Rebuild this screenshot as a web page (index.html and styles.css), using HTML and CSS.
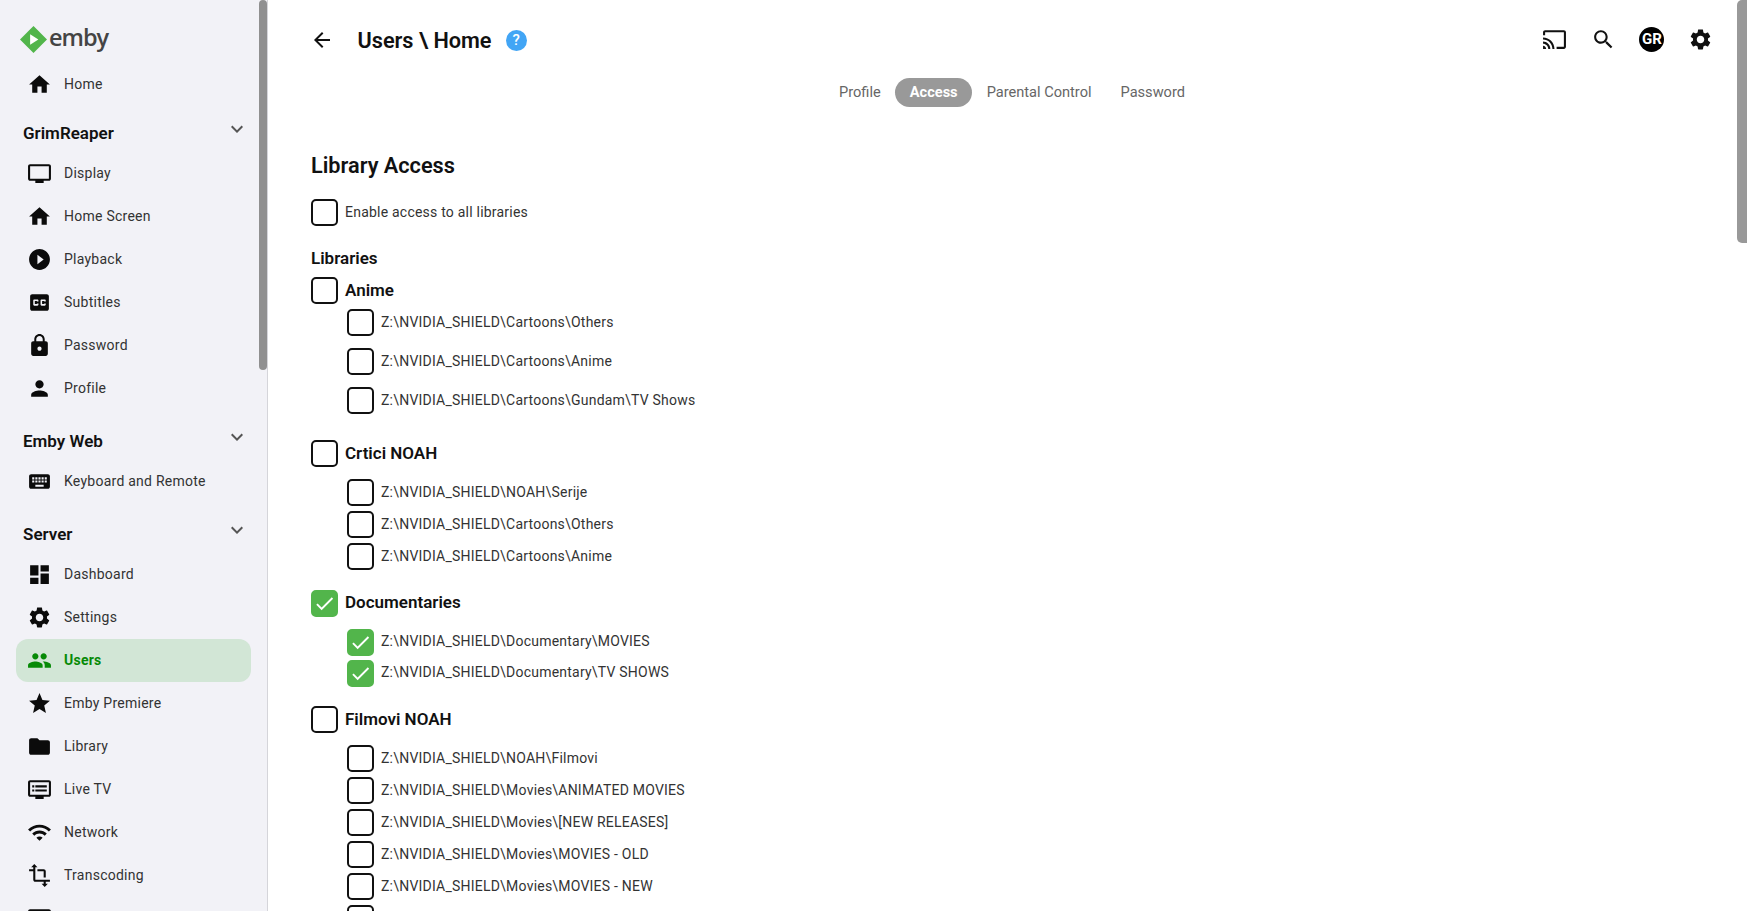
FILE: index.html
```html
<!DOCTYPE html>
<html lang="en">
<head>
  <meta charset="UTF-8">
  <title>Users - Emby</title>
  <link rel="stylesheet" href="styles.css">
</head>
<body>

  <!-- Icon set -->
  <svg class="icon-defs" xmlns="http://www.w3.org/2000/svg">
    <symbol id="i-home" viewBox="0 0 24 24"><path d="M10 20v-6h4v6h5v-8h3L12 3 2 12h3v8z"/></symbol>
    <symbol id="i-tv" viewBox="0 0 24 24"><path d="M21 3H3c-1.1 0-2 .9-2 2v12c0 1.1.9 2 2 2h5v2h8v-2h5c1.1 0 1.99-.9 1.99-2L23 5c0-1.1-.9-2-2-2zm0 14H3V5h18v12z"/></symbol>
    <symbol id="i-play" viewBox="0 0 24 24"><path d="M12 2C6.48 2 2 6.48 2 12s4.48 10 10 10 10-4.48 10-10S17.52 2 12 2zm-2 14.5v-9l6 4.5-6 4.5z"/></symbol>
    <symbol id="i-cc" viewBox="0 0 24 24"><path d="M19 4H5c-1.11 0-2 .9-2 2v12c0 1.1.89 2 2 2h14c1.1 0 2-.9 2-2V6c0-1.1-.9-2-2-2zm-8 7H9.5v-.5h-2v3h2V13H11v1c0 .55-.45 1-1 1H7c-.55 0-1-.45-1-1v-4c0-.55.45-1 1-1h3c.55 0 1 .45 1 1v1zm7 0h-1.5v-.5h-2v3h2V13H18v1c0 .55-.45 1-1 1h-3c-.55 0-1-.45-1-1v-4c0-.55.45-1 1-1h3c.55 0 1 .45 1 1v1z"/></symbol>
    <symbol id="i-lock" viewBox="0 0 24 24"><path d="M18 8h-1V6c0-2.76-2.24-5-5-5S7 3.24 7 6v2H6c-1.1 0-2 .9-2 2v10c0 1.1.9 2 2 2h12c1.1 0 2-.9 2-2V10c0-1.1-.9-2-2-2zm-6 9c-1.1 0-2-.9-2-2s.9-2 2-2 2 .9 2 2-.9 2-2 2zm3.1-9H8.9V6c0-1.71 1.39-3.1 3.1-3.1 1.71 0 3.1 1.39 3.1 3.1v2z"/></symbol>
    <symbol id="i-person" viewBox="0 0 24 24"><path d="M12 12c2.21 0 4-1.79 4-4s-1.79-4-4-4-4 1.79-4 4 1.79 4 4 4zm0 2c-2.67 0-8 1.34-8 4v2h16v-2c0-2.66-5.33-4-8-4z"/></symbol>
    <symbol id="i-keyboard" viewBox="0 0 24 24"><path d="M20 5H4c-1.1 0-1.99.9-1.99 2L2 17c0 1.1.9 2 2 2h16c1.1 0 2-.9 2-2V7c0-1.1-.9-2-2-2zm-9 3h2v2h-2V8zm0 3h2v2h-2v-2zM8 8h2v2H8V8zm0 3h2v2H8v-2zm-1 2H5v-2h2v2zm0-3H5V8h2v2zm9 7H8v-2h8v2zm0-4h-2v-2h2v2zm0-3h-2V8h2v2zm3 3h-2v-2h2v2zm0-3h-2V8h2v2z"/></symbol>
    <symbol id="i-dashboard" viewBox="0 0 24 24"><path d="M3 13h8V3H3v10zm0 8h8v-6H3v6zm10 0h8V11h-8v10zm0-18v6h8V3h-8z"/></symbol>
    <symbol id="i-settings" viewBox="0 0 24 24"><path d="M19.14 12.94c.04-.3.06-.61.06-.94 0-.32-.02-.64-.07-.94l2.03-1.58c.18-.14.23-.41.12-.61l-1.92-3.32c-.12-.22-.37-.29-.59-.22l-2.39.96c-.5-.38-1.03-.7-1.62-.94l-.36-2.54c-.04-.24-.24-.41-.48-.41h-3.84c-.24 0-.43.17-.47.41l-.36 2.54c-.59.24-1.13.57-1.62.94l-2.39-.96c-.22-.08-.47 0-.59.22L2.74 8.87c-.12.21-.08.47.12.61l2.03 1.58c-.05.3-.09.63-.09.94s.02.64.07.94l-2.03 1.58c-.18.14-.23.41-.12.61l1.92 3.32c.12.22.37.29.59.22l2.39-.96c.5.38 1.03.7 1.62.94l.36 2.54c.05.24.24.41.48.41h3.84c.24 0 .44-.17.47-.41l.36-2.54c.59-.24 1.13-.56 1.62-.94l2.39.96c.22.08.47 0 .59-.22l1.92-3.32c.12-.22.07-.47-.12-.61l-2.01-1.58zM12 15.6c-1.98 0-3.6-1.62-3.6-3.6s1.62-3.6 3.6-3.6 3.6 1.62 3.6 3.6-1.62 3.6-3.6 3.6z"/></symbol>
    <symbol id="i-people" viewBox="0 0 24 24"><path d="M16 11c1.66 0 2.99-1.34 2.99-3S17.66 5 16 5c-1.66 0-3 1.34-3 3s1.34 3 3 3zm-8 0c1.66 0 2.99-1.34 2.99-3S9.66 5 8 5C6.34 5 5 6.34 5 8s1.34 3 3 3zm0 2c-2.33 0-7 1.17-7 3.5V19h14v-2.5c0-2.33-4.67-3.5-7-3.5zm8 0c-.29 0-.62.02-.97.05 1.16.84 1.97 1.97 1.97 3.45V19h6v-2.5c0-2.33-4.67-3.5-7-3.5z"/></symbol>
    <symbol id="i-star" viewBox="0 0 24 24"><path d="M12 17.27L18.18 21l-1.64-7.03L22 9.24l-7.19-.61L12 2 9.19 8.63 2 9.24l5.46 4.73L5.82 21z"/></symbol>
    <symbol id="i-folder" viewBox="0 0 24 24"><path d="M10 4H4c-1.1 0-1.99.9-1.99 2L2 18c0 1.1.9 2 2 2h16c1.1 0 2-.9 2-2V8c0-1.1-.9-2-2-2h-8l-2-2z"/></symbol>
    <symbol id="i-dvr" viewBox="0 0 24 24"><path d="M21 3H3c-1.1 0-2 .9-2 2v12c0 1.1.9 2 2 2h5v2h8v-2h5c1.1 0 1.99-.9 1.99-2L23 5c0-1.1-.9-2-2-2zm0 14H3V5h18v12zm-2-9H8v2h11V8zm0 4H8v2h11v-2zM7 8H5v2h2V8zm0 4H5v2h2v-2z"/></symbol>
    <symbol id="i-wifi" viewBox="0 0 24 24"><path d="M1 9l2 2c4.97-4.97 13.03-4.97 18 0l2-2C16.93 2.93 7.08 2.93 1 9zm8 8l3 3 3-3c-1.65-1.66-4.34-1.66-6 0zm-4-4l2 2c2.76-2.76 7.24-2.76 10 0l2-2C15.14 9.14 8.87 9.14 5 13z"/></symbol>
    <symbol id="i-crop" viewBox="0 0 24 24"><path d="M22 18v-2H8V4h2L7 1 4 4h2v2H2v2h4v8c0 1.1.9 2 2 2h8v2h-2l3 3 3-3h-2v-2h4zM10 8h6v6h2V8c0-1.1-.9-2-2-2h-6v2z"/></symbol>
    <symbol id="i-expand" viewBox="0 0 24 24"><path d="M16.59 8.59L12 13.17 7.41 8.59 6 10l6 6 6-6z"/></symbol>
    <symbol id="i-back" viewBox="0 0 24 24"><path d="M20 11H7.83l5.59-5.59L12 4l-8 8 8 8 1.41-1.41L7.83 13H20v-2z"/></symbol>
    <symbol id="i-search" viewBox="0 0 24 24"><path d="M15.5 14h-.79l-.28-.27C15.41 12.59 16 11.11 16 9.5 16 5.91 13.09 3 9.5 3S3 5.91 3 9.5 5.91 16 9.5 16c1.61 0 3.09-.59 4.23-1.57l.27.28v.79l5 4.99L20.49 19l-4.99-5zm-6 0C7.01 14 5 11.99 5 9.5S7.01 5 9.5 5 14 7.01 14 9.5 11.99 14 9.5 14z"/></symbol>
    <symbol id="i-cast" viewBox="0 0 24 24"><path d="M21 3H3c-1.1 0-2 .9-2 2v3h2V5h18v14h-7v2h7c1.1 0 2-.9 2-2V5c0-1.1-.9-2-2-2zM1 18v3h3c0-1.66-1.34-3-3-3zm0-4v2c2.76 0 5 2.24 5 5h2c0-3.87-3.13-7-7-7zm0-4v2c4.97 0 9 4.03 9 9h2c0-6.08-4.93-11-11-11z"/></symbol>
    <symbol id="i-check" viewBox="0 0 24 24"><path d="M9 16.17L4.83 12l-1.42 1.41L9 19 21 7l-1.41-1.41z"/></symbol>
  </svg>

  <div class="app">

    <!-- Sidebar -->
    <aside class="sidebar">
      <div class="logo">
        <svg class="logo-mark" viewBox="0 0 28 28">
          <path fill="#52b54b" d="M14 0 8.500 5.500 7 7 0 14 7 21 14 28 21 21 22 20 28 14 21 7 19.500 5.500z"/>
          <path fill="#fff" d="M10.500 8.500v11l8.500-5.500z"/>
        </svg>
        <span class="logo-text">emby</span>
      </div>

      <a class="nav-item"><svg class="nav-icon"><use href="#i-home"/></svg>Home</a>

      <div class="nav-title nav-title-first">GrimReaper<svg class="nav-arrow"><use href="#i-expand"/></svg></div>
      <a class="nav-item"><svg class="nav-icon"><use href="#i-tv"/></svg>Display</a>
      <a class="nav-item"><svg class="nav-icon"><use href="#i-home"/></svg>Home Screen</a>
      <a class="nav-item"><svg class="nav-icon"><use href="#i-play"/></svg>Playback</a>
      <a class="nav-item"><svg class="nav-icon"><use href="#i-cc"/></svg>Subtitles</a>
      <a class="nav-item"><svg class="nav-icon"><use href="#i-lock"/></svg>Password</a>
      <a class="nav-item"><svg class="nav-icon"><use href="#i-person"/></svg>Profile</a>

      <div class="nav-title">Emby Web<svg class="nav-arrow"><use href="#i-expand"/></svg></div>
      <a class="nav-item"><svg class="nav-icon"><use href="#i-keyboard"/></svg>Keyboard and Remote</a>

      <div class="nav-title">Server<svg class="nav-arrow"><use href="#i-expand"/></svg></div>
      <a class="nav-item"><svg class="nav-icon"><use href="#i-dashboard"/></svg>Dashboard</a>
      <a class="nav-item"><svg class="nav-icon"><use href="#i-settings"/></svg>Settings</a>
      <a class="nav-item nav-item-active"><svg class="nav-icon"><use href="#i-people"/></svg>Users</a>
      <a class="nav-item"><svg class="nav-icon"><use href="#i-star"/></svg>Emby Premiere</a>
      <a class="nav-item"><svg class="nav-icon"><use href="#i-folder"/></svg>Library</a>
      <a class="nav-item"><svg class="nav-icon"><use href="#i-dvr"/></svg>Live TV</a>
      <a class="nav-item"><svg class="nav-icon"><use href="#i-wifi"/></svg>Network</a>
      <a class="nav-item"><svg class="nav-icon"><use href="#i-crop"/></svg>Transcoding</a>
      <a class="nav-item"><svg class="nav-icon"><use href="#i-dvr"/></svg>Conversions</a>

      <div class="scroll-thumb side-thumb"></div>
    </aside>

    <!-- Main content -->
    <main class="content">
      <div class="scroll-thumb main-thumb"></div>

      <header class="page-header">
        <svg class="back-icon"><use href="#i-back"/></svg>
        <h1 class="page-title">Users \ Home</h1>
        <span class="help-badge">?</span>
        <div class="header-actions">
          <svg class="action-icon"><use href="#i-cast"/></svg>
          <svg class="action-icon"><use href="#i-search"/></svg>
          <span class="avatar">GR</span>
          <svg class="action-icon"><use href="#i-settings"/></svg>
        </div>
      </header>

      <nav class="tabs">
        <a class="tab">Profile</a>
        <a class="tab tab-active">Access</a>
        <a class="tab">Parental Control</a>
        <a class="tab">Password</a>
      </nav>

      <section class="access">
        <h2 class="section-title">Library Access</h2>

        <label class="check-row enable-row"><span class="box"></span>Enable access to all libraries</label>

        <h3 class="libs-title">Libraries</h3>

        <div class="lib lib-anime">
          <label class="check-row lib-name"><span class="box"></span>Anime</label>
          <div class="folders">
            <label class="check-row folder"><span class="box"></span>Z:\NVIDIA_SHIELD\Cartoons\Others</label>
            <label class="check-row folder"><span class="box"></span>Z:\NVIDIA_SHIELD\Cartoons\Anime</label>
            <label class="check-row folder"><span class="box"></span>Z:\NVIDIA_SHIELD\Cartoons\Gundam\TV Shows</label>
          </div>
        </div>

        <div class="lib">
          <label class="check-row lib-name"><span class="box"></span>Crtici NOAH</label>
          <div class="folders">
            <label class="check-row folder"><span class="box"></span>Z:\NVIDIA_SHIELD\NOAH\Serije</label>
            <label class="check-row folder"><span class="box"></span>Z:\NVIDIA_SHIELD\Cartoons\Others</label>
            <label class="check-row folder"><span class="box"></span>Z:\NVIDIA_SHIELD\Cartoons\Anime</label>
          </div>
        </div>

        <div class="lib lib-docs">
          <label class="check-row lib-name"><span class="box box-on"><svg><use href="#i-check"/></svg></span>Documentaries</label>
          <div class="folders">
            <label class="check-row folder"><span class="box box-on"><svg><use href="#i-check"/></svg></span>Z:\NVIDIA_SHIELD\Documentary\MOVIES</label>
            <label class="check-row folder"><span class="box box-on"><svg><use href="#i-check"/></svg></span>Z:\NVIDIA_SHIELD\Documentary\TV SHOWS</label>
          </div>
        </div>

        <div class="lib">
          <label class="check-row lib-name"><span class="box"></span>Filmovi NOAH</label>
          <div class="folders">
            <label class="check-row folder"><span class="box"></span>Z:\NVIDIA_SHIELD\NOAH\Filmovi</label>
            <label class="check-row folder"><span class="box"></span>Z:\NVIDIA_SHIELD\Movies\ANIMATED MOVIES</label>
            <label class="check-row folder"><span class="box"></span>Z:\NVIDIA_SHIELD\Movies\[NEW RELEASES]</label>
            <label class="check-row folder"><span class="box"></span>Z:\NVIDIA_SHIELD\Movies\MOVIES - OLD</label>
            <label class="check-row folder"><span class="box"></span>Z:\NVIDIA_SHIELD\Movies\MOVIES - NEW</label>
            <label class="check-row folder"><span class="box"></span>Z:\NVIDIA_SHIELD\Movies\MARVEL DC</label>
          </div>
        </div>
      </section>
    </main>
  </div>

</body>
</html>
```

FILE: styles.css
```css
html, body {
  margin: 0;
  height: 100%;
  overflow: hidden;
}

body {
  font-family: Roboto, "Liberation Sans", sans-serif;
  background-color: white;
  color: #111;
}

.icon-defs {
  display: none;
}

.app {
  display: flex;
  height: 911px;
  overflow: hidden;
}

/* Sidebar */
.sidebar {
  position: relative;
  flex: none;
  box-sizing: border-box;
  width: 268px;
  height: 911px;
  overflow: hidden;
  padding: 0 16px;
  background-color: #f2f2f7;
  border-right: 1px solid #d5d5da;
}

.logo {
  display: flex;
  align-items: center;
  gap: 2px;
  height: 38px;
  margin-bottom: 4.5px;
  padding: 20px 0 0 4px;
}

.logo-mark {
  width: 27px;
  height: 27px;
  flex: none;
}

.logo-text {
  margin-top: -5px;
  font-family: "Open Sans", sans-serif;
  font-size: 23.5px;
  font-weight: 600;
  letter-spacing: -1px;
  color: #444;
}

.nav-item {
  display: flex;
  align-items: center;
  gap: 12px;
  box-sizing: border-box;
  width: 235px;
  height: 43px;
  padding-left: 11px;
  border-radius: 12px;
  font-size: 14px;
  letter-spacing: 0.25px;
  color: #333;
}

.nav-icon {
  flex: none;
  width: 25px;
  height: 25px;
  fill: #0b0b0b;
}

.nav-item-active {
  background-color: #d2e6d6;
  color: #078a07;
  font-weight: 700;
}

.nav-item-active .nav-icon {
  fill: #078a07;
}

.nav-title {
  display: flex;
  justify-content: space-between;
  width: 226px;
  height: 24px;
  margin-top: 19.5px;
  margin-bottom: 6.5px;
  padding-left: 7px;
  font-size: 17px;
  font-weight: 600;
  line-height: 24px;
}

.nav-title-first {
  margin-top: 15.5px;
}

.nav-arrow {
  width: 24px;
  height: 24px;
  margin-top: -4px;
  fill: #555;
}

.scroll-thumb {
  position: absolute;
  top: 0;
  background-color: #909090;
}

.side-thumb {
  left: 259px;
  width: 8px;
  height: 370px;
  border-radius: 4px;
}

.main-thumb {
  right: 0;
  width: 10px;
  height: 243px;
  border-radius: 5px 0 0 5px;
  background-color: #999;
}

/* Main content */
.content {
  position: relative;
  flex: 1;
  min-width: 0;
  height: 911px;
  overflow: hidden;
  padding-left: 43px;
}

.page-header {
  display: flex;
  align-items: center;
  height: 80px;
  padding-right: 34px;
}

.back-icon {
  flex: none;
  width: 24px;
  height: 24px;
  margin-left: -1px;
  fill: #111;
}

.page-title {
  margin: 0 0 0 23.5px;
  font-size: 21.7px;
  font-weight: 600;
}

.help-badge {
  width: 21px;
  height: 21px;
  margin-left: 14px;
  border-radius: 50%;
  background-color: #42a5f5;
  color: white;
  font-size: 15px;
  font-weight: 500;
  line-height: 21px;
  text-align: center;
}

.header-actions {
  display: flex;
  align-items: center;
  gap: 23.6px;
  margin-top: -1px;
  margin-left: auto;
}

.action-icon {
  width: 25px;
  height: 25px;
  fill: #111;
}

.avatar {
  width: 25px;
  height: 25px;
  border-radius: 50%;
  background-color: black;
  color: white;
  font-size: 15px;
  font-weight: 700;
  line-height: 25px;
  text-align: center;
}

.tabs {
  display: flex;
  justify-content: center;
  height: 29px;
  margin-top: -2px;
  padding-right: 34px;
}

.tab {
  padding: 0 14.5px;
  border-radius: 15px;
  font-size: 14.6px;
  line-height: 29px;
  color: #666;
}

.tab-active {
  background-color: #999;
  color: white;
  font-weight: 700;
}

/* Library access form */
.section-title {
  margin: 45px 0 0;
  font-size: 21.7px;
  font-weight: 600;
  line-height: 28px;
}

.check-row {
  display: flex;
  align-items: center;
  gap: 7px;
}

.box {
  display: flex;
  flex: none;
  align-items: center;
  justify-content: center;
  box-sizing: border-box;
  width: 27px;
  height: 27px;
  margin-top: 2px;
  border: 2px solid #111;
  border-radius: 5px;
  background-color: white;
}

.box-on {
  border-color: #52b54b;
  background-color: #52b54b;
}

.box-on svg {
  flex: none;
  width: 23px;
  height: 23px;
  fill: white;
}

.enable-row {
  margin-top: 17px;
  font-size: 14px;
  letter-spacing: 0.22px;
  color: #333;
}

.libs-title {
  margin: 21px 0 0;
  font-size: 17px;
  font-weight: 600;
  line-height: 22px;
}

.lib {
  margin-bottom: 18px;
}

.lib-name {
  font-size: 17px;
  font-weight: 600;
}

.lib-anime {
  margin-top: 6px;
  margin-bottom: 21px;
}

.folders {
  display: flex;
  flex-direction: column;
  gap: 4px;
  margin-top: 10.5px;
  padding-left: 36px;
}

.folder {
  height: 28px;
  font-size: 14px;
  letter-spacing: 0.22px;
  color: #333;
}

.lib-anime .folders {
  margin-top: 0;
}

.lib-anime .folder {
  height: 35px;
}

.lib-docs .folders {
  gap: 3px;
}
```
